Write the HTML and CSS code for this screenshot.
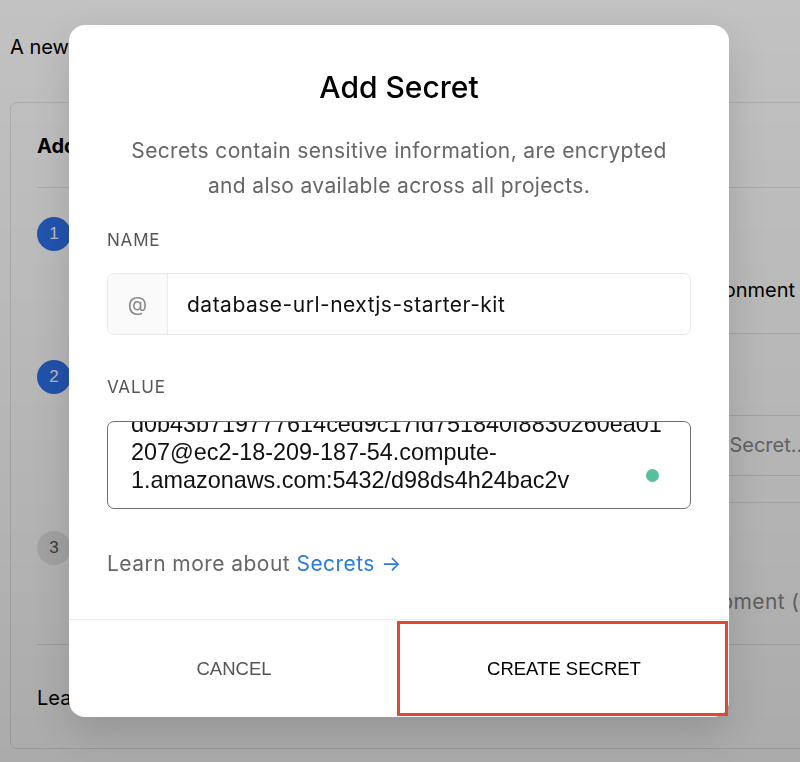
FILE: index.html
```html
<!DOCTYPE html>
<html lang="en">
<head>
<meta charset="utf-8">
<title>Add Secret</title>
<link rel="stylesheet" href="styles.css">
</head>
<body>
<div class="page">
  <p class="intro">A new Secret will be created and linked to your Project.</p>
  <section class="card">
    <h2 class="card-title">Add New Environment Variable</h2>
    <div class="step step-1">
      <span class="num num-active">1</span>
      <div class="step-body">
        <div class="step-title">Choose the environments</div>
        <div class="step-field step-field-1">Production Environment</div>
      </div>
    </div>
    <div class="step step-2">
      <span class="num num-active">2</span>
      <div class="step-body">
        <div class="step-title">Select a Secret</div>
        <div class="step-input">Search or create a Secret...</div>
        <div class="step-rule"></div>
      </div>
    </div>
    <div class="step step-3">
      <span class="num">3</span>
      <div class="step-body">
        <div class="step-title">Name the variable</div>
        <div class="step-field step-field-3">Production, Preview, Development (default)</div>
      </div>
    </div>
    <div class="card-foot">Learn more about Environment Variables</div>
  </section>
</div>

<div class="backdrop"></div>

<div class="modal" role="dialog" aria-labelledby="modal-title">
  <div class="modal-body">
    <h1 id="modal-title" class="modal-title">Add Secret</h1>
    <p class="modal-desc">Secrets contain sensitive information, are encrypted and also available across all projects.</p>

    <label class="field-label">NAME</label>
    <div class="name-input">
      <span class="prefix">@</span>
      <span class="name-value">database-url-nextjs-starter-kit</span>
    </div>

    <label class="field-label field-label-value">VALUE</label>
    <div class="value-input">
      <div class="value-text">
        <span class="line">d0b43b719777614ced9c17fd751840f8830260ea01</span>
        <span class="line">207@ec2-18-209-187-54.compute-</span>
        <span class="line">1.amazonaws.com:5432/d98ds4h24bac2v</span>
      </div>
      <span class="status-dot"></span>
    </div>

    <p class="learn">Learn more about <a class="learn-link" href="#">Secrets →</a></p>
  </div>
  <div class="modal-foot">
    <button class="btn btn-cancel" type="button">CANCEL</button>
    <button class="btn btn-create" type="button">CREATE SECRET</button>
  </div>
  <div class="highlight"></div>
</div>
</body>
</html>
```

FILE: styles.css
```css
* { box-sizing: border-box; }

html, body {
  margin: 0;
  height: 100%;
  overflow: hidden;
}

body {
  background: #ffffff;
  font-family: Inter, "Liberation Sans", sans-serif;
  color: #111;
}

.page {
  padding: 35px 0 0 10px;
  width: 920px;
}

.intro {
  margin: 0;
  font-size: 20px;
  line-height: 24px;
  color: #000;
  white-space: nowrap;
}

.card {
  margin-top: 43px;
  width: 900px;
  height: 647px;
  border: 1px solid #e4e4e4;
  border-radius: 7px;
  padding: 0 26px;
  display: flex;
  flex-direction: column;
}

.card-title {
  margin: 0;
  height: 85px;
  display: flex;
  align-items: center;
  padding-top: 2px;
  font-size: 20px;
  font-weight: 700;
  color: #000;
  border-bottom: 1px solid #e4e4e4;
  white-space: nowrap;
}

.step {
  display: flex;
  gap: 20px;
}
.step-1 { height: 143px; padding-top: 29px; }
.step-2 { height: 171px; padding-top: 29px; }
.step-3 { height: 143px; padding-top: 29px; border-bottom: 1px solid #e4e4e4; }

.num {
  flex: 0 0 34px;
  width: 34px;
  height: 34px;
  border-radius: 50%;
  background: #e8e8e8;
  color: #555;
  font-family: "Liberation Sans", sans-serif;
  font-size: 17px;
  display: flex;
  align-items: center;
  justify-content: center;
}
.num-active {
  background: #2f73ee;
  color: #fff;
}

.step-body {
  flex: 1;
  display: flex;
  flex-direction: column;
  min-width: 0;
}

.step-title {
  font-size: 20px;
  line-height: 24px;
  height: 24px;
  color: #000;
  font-weight: 600;
  white-space: nowrap;
}

.step-field {
  font-size: 20px;
  line-height: 24px;
  white-space: nowrap;
  text-align: right;
}
.step-field-1 {
  margin-top: 37px;
  padding: 0 88px 31px 0;
  border-bottom: 1px solid #e4e4e4;
  color: #000;
}
.step-field-3 {
  margin-top: 35px;
  margin-right: 4px;
  font-size: 21px;
  letter-spacing: 0.4px;
  color: #8a8a8a;
}

.step-input {
  margin-top: 31px;
  height: 61px;
  border: 1px solid #e4e4e4;
  border-radius: 6px;
  font-size: 20px;
  line-height: 59px;
  color: #8a8a8a;
  text-align: right;
  padding-right: 74px;
  white-space: nowrap;
}
.step-rule {
  margin-top: 26px;
  border-top: 1px solid #e4e4e4;
}

.card-foot {
  padding-top: 41px;
  font-size: 20px;
  line-height: 24px;
  color: #000;
  white-space: nowrap;
}

.backdrop {
  position: fixed;
  inset: 0;
  background: linear-gradient(180deg, rgba(0,0,0,0.24) 0%, rgba(0,0,0,0.29) 60%, rgba(0,0,0,0.33) 100%);
}

.modal {
  position: absolute;
  left: 69px;
  top: 25px;
  width: 660px;
  height: 692px;
  background: #fff;
  border-radius: 16px;
  box-shadow: 0 16px 40px rgba(0,0,0,0.14);
  display: flex;
  flex-direction: column;
}

.modal-body {
  flex: 1;
  padding: 44px 38px 0 38px;
  display: flex;
  flex-direction: column;
}

.modal-title {
  margin: 0;
  text-align: center;
  font-size: 30px;
  line-height: 36px;
  font-weight: 500;
  color: #000;
}

.modal-desc {
  margin: 28px 10px 0;
  text-align: center;
  font-size: 21px;
  letter-spacing: 0.35px;
  line-height: 35px;
  color: #666;
}

.field-label {
  margin-top: 27px;
  font-size: 17px;
  letter-spacing: 0.8px;
  line-height: 20px;
  color: #555;
}
.field-label-value { margin-top: 42px; }

.name-input {
  margin-top: 23px;
  height: 62px;
  border: 1px solid #e8e8e8;
  border-radius: 7px;
  display: flex;
  align-items: stretch;
  overflow: hidden;
}
.prefix {
  width: 60px;
  flex: 0 0 60px;
  background: #fafafa;
  border-right: 1px solid #ececec;
  color: #888;
  font-size: 20px;
  display: flex;
  align-items: center;
  justify-content: center;
}
.name-value {
  padding-left: 19px;
  display: flex;
  align-items: center;
  font-size: 21px;
  letter-spacing: 0.5px;
  color: #111;
}

.value-input {
  position: relative;
  margin-top: 24px;
  height: 88px;
  border: 1.5px solid #6e6e6e;
  border-radius: 7px;
  overflow: hidden;
}
.value-text {
  margin-top: -12px;
  padding-left: 23px;
  font-family: "Liberation Sans", Arial, sans-serif;
  font-size: 23.4px;
  line-height: 28px;
  color: #111;
}
.line { display: block; white-space: nowrap; }

.status-dot {
  position: absolute;
  right: 31px;
  top: 47px;
  width: 13px;
  height: 13px;
  border-radius: 50%;
  background: #55c09a;
}

.learn {
  margin: 43px 0 0;
  font-size: 21px;
  letter-spacing: 0.45px;
  line-height: 24px;
  color: #666;
}
.learn-link {
  color: #2b7be0;
  text-decoration: none;
}

.modal-foot {
  height: 98px;
  border-top: 1.5px solid #ebebeb;
  display: flex;
}
.btn {
  flex: 1;
  border: 0;
  background: transparent;
  font-family: "Liberation Sans", Arial, sans-serif;
  font-size: 18.5px;
  cursor: pointer;
  padding: 0;
}
.btn-cancel { color: #555; }
.btn-create { color: #000; }

.highlight {
  position: absolute;
  left: 328px;
  top: 596px;
  width: 331px;
  height: 95px;
  border: 3px solid #e3472d;
  pointer-events: none;
}
```
